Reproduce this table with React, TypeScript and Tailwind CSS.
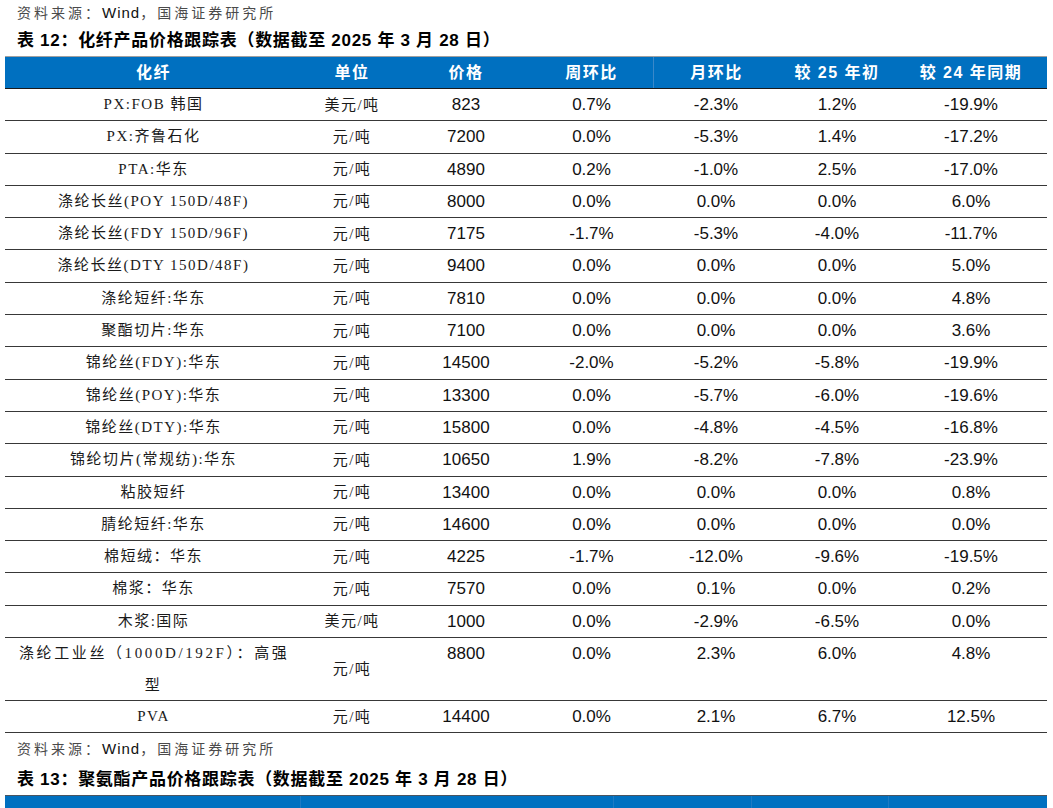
const cols = "grid grid-cols-[297px_100px_128px_123px_126px_116px_152px]";

const headers = ["化纤", "单位", "价格", "周环比", "月环比", "较 25 年初", "较 24 年同期"];

const rows: string[][] = [
  ["PX:FOB 韩国", "美元/吨", "823", "0.7%", "-2.3%", "1.2%", "-19.9%"],
  ["PX:齐鲁石化", "元/吨", "7200", "0.0%", "-5.3%", "1.4%", "-17.2%"],
  ["PTA:华东", "元/吨", "4890", "0.2%", "-1.0%", "2.5%", "-17.0%"],
  ["涤纶长丝(POY 150D/48F)", "元/吨", "8000", "0.0%", "0.0%", "0.0%", "6.0%"],
  ["涤纶长丝(FDY 150D/96F)", "元/吨", "7175", "-1.7%", "-5.3%", "-4.0%", "-11.7%"],
  ["涤纶长丝(DTY 150D/48F)", "元/吨", "9400", "0.0%", "0.0%", "0.0%", "5.0%"],
  ["涤纶短纤:华东", "元/吨", "7810", "0.0%", "0.0%", "0.0%", "4.8%"],
  ["聚酯切片:华东", "元/吨", "7100", "0.0%", "0.0%", "0.0%", "3.6%"],
  ["锦纶丝(FDY):华东", "元/吨", "14500", "-2.0%", "-5.2%", "-5.8%", "-19.9%"],
  ["锦纶丝(POY):华东", "元/吨", "13300", "0.0%", "-5.7%", "-6.0%", "-19.6%"],
  ["锦纶丝(DTY):华东", "元/吨", "15800", "0.0%", "-4.8%", "-4.5%", "-16.8%"],
  ["锦纶切片(常规纺):华东", "元/吨", "10650", "1.9%", "-8.2%", "-7.8%", "-23.9%"],
  ["粘胶短纤", "元/吨", "13400", "0.0%", "0.0%", "0.0%", "0.8%"],
  ["腈纶短纤:华东", "元/吨", "14600", "0.0%", "0.0%", "0.0%", "0.0%"],
  ["棉短绒：华东", "元/吨", "4225", "-1.7%", "-12.0%", "-9.6%", "-19.5%"],
  ["棉浆：华东", "元/吨", "7570", "0.0%", "0.1%", "0.0%", "0.2%"],
  ["木浆:国际", "美元/吨", "1000", "0.0%", "-2.9%", "-6.5%", "0.0%"],
  ["涤纶工业丝（1000D/192F）：高强型", "元/吨", "8800", "0.0%", "2.3%", "6.0%", "4.8%"],
  ["PVA", "元/吨", "14400", "0.0%", "2.1%", "6.7%", "12.5%"],
];

const cjkSerif = "font-['Liberation_Serif','Noto_Sans_CJK_SC',serif]";
const sans = "font-['Liberation_Sans','Noto_Sans_CJK_SC',sans-serif]";

function Source() {
  return (
    <div className={`${sans} pl-[17px] text-[14px] tracking-[3px] text-[#4a4a4a] flex items-center`}>
      资料来源：<span className="text-[#111] tracking-[1px] text-[15px]">Wind</span>，国海证券研究所
    </div>
  );
}

function Row({ r, tall }: { r: string[]; tall: boolean }) {
  return (
    <div className={`${cols} border-b border-[#383838] ${tall ? "h-[63px]" : "h-[32.31px]"}`}>
      {tall ? (
        <div className={`${cjkSerif} px-[14px] text-center text-[15px] tracking-[2.6px] leading-[31.5px] text-[#1a1a1a]`}>
          <span className="whitespace-nowrap">涤纶工业丝（1000D/192F）：高强</span>
          <br />型
        </div>
      ) : (
        <div className={`${cjkSerif} px-[15px] text-center text-[15px] tracking-[1.5px] leading-[31.5px] text-[#1a1a1a]`}>
          {r[0]}
        </div>
      )}
      <div className={`${cjkSerif} flex items-center justify-center text-[15px] tracking-[1.5px] text-[#1a1a1a]`}>
        {r[1]}
      </div>
      {r.slice(2).map((v, i) => (
        <div key={i} className={`${sans} text-center text-[17px] leading-[31.5px] text-[#111]`}>
          {v}
        </div>
      ))}
    </div>
  );
}

export default function App() {
  return (
    <div className="w-[1053px] h-[808px] bg-white overflow-hidden">
      <div className="h-[26px] flex items-center">
        <Source />
      </div>
      <div className={`${sans} h-[30px] flex items-center pl-[17px] text-[17px] font-bold tracking-[0.7px] text-black`}>
        表 12：化纤产品价格跟踪表（数据截至 2025 年 3 月 28 日）
      </div>

      <div className="ml-[5px] w-[1042px]">
        <div className={`${cols} h-[33px] bg-[#0070c0] border-t border-[#a0a0a0] border-b border-b-[#1a1a1a]`}>
          {headers.map((h, i) => (
            <div
              key={h}
              className={`${sans} flex items-center justify-center text-[16px] font-bold tracking-[1.5px] text-white ${
                i === 4 ? "border-l border-[#3a88c9]" : ""
              }`}
            >
              {h}
            </div>
          ))}
        </div>
        {rows.map((r, i) => (
          <Row key={i} r={r} tall={i === 17} />
        ))}
      </div>

      <div className="h-[30px] flex items-center mt-[1px]">
        <Source />
      </div>
      <div className={`${sans} h-[31px] flex items-center pl-[17px] text-[17px] font-bold tracking-[0.7px] text-black`}>
        表 13：聚氨酯产品价格跟踪表（数据截至 2025 年 3 月 28 日）
      </div>
      <div className="ml-[5px] w-[1042px] h-[20px] bg-[#0070c0] border-t border-[#4a5560] grid grid-cols-[295px_313px_138px_137px_159px]">
        <div />
        <div className="border-l border-[#1e7ac4]" />
        <div className="border-l border-[#1e7ac4]" />
        <div className="border-l border-[#1e7ac4]" />
        <div className="border-l border-[#1e7ac4]" />
      </div>
    </div>
  );
}
